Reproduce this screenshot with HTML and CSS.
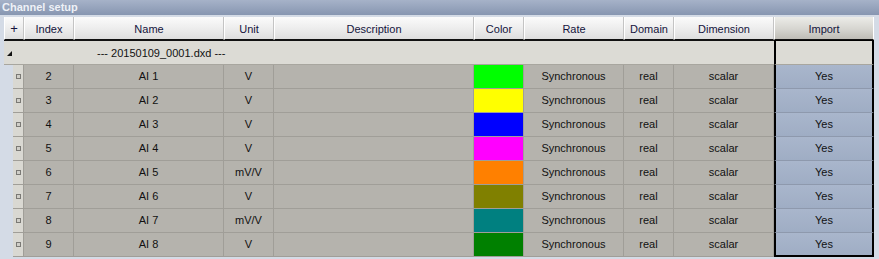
FILE: index.html
```html
<!DOCTYPE html>
<html lang="en">
<head>
    <meta charset="UTF-8">
    <title>Channel setup</title>
    <link rel="stylesheet" href="styles.css">
</head>
<body>
    <div class="title-bar">Channel setup</div>
    <div class="grid-wrap">
        <div class="grid">
            <div class="hcell plus">+</div>
            <div class="hcell">Index</div>
            <div class="hcell">Name</div>
            <div class="hcell">Unit</div>
            <div class="hcell">Description</div>
            <div class="hcell">Color</div>
            <div class="hcell">Rate</div>
            <div class="hcell">Domain</div>
            <div class="hcell">Dimension</div>
            <div class="hcell import-head">Import</div>

            <div class="group-row">
                <span class="toggle"></span>
                <span class="group-label">--- 20150109_0001.dxd ---</span>
            </div>
            <div class="group-import"></div>

            <div class="row">
                <div class="cell indicator"><span class="mark"></span></div>
                <div class="cell">2</div><div class="cell">AI 1</div><div class="cell">V</div><div class="cell"></div>
                <div class="cell swatch" style="background:#00ff00"></div>
                <div class="cell">Synchronous</div><div class="cell">real</div><div class="cell">scalar</div>
                <div class="cell imp">Yes</div>
            </div>
            <div class="row">
                <div class="cell indicator"><span class="mark"></span></div>
                <div class="cell">3</div><div class="cell">AI 2</div><div class="cell">V</div><div class="cell"></div>
                <div class="cell swatch" style="background:#ffff00"></div>
                <div class="cell">Synchronous</div><div class="cell">real</div><div class="cell">scalar</div>
                <div class="cell imp">Yes</div>
            </div>
            <div class="row">
                <div class="cell indicator"><span class="mark"></span></div>
                <div class="cell">4</div><div class="cell">AI 3</div><div class="cell">V</div><div class="cell"></div>
                <div class="cell swatch" style="background:#0000ff"></div>
                <div class="cell">Synchronous</div><div class="cell">real</div><div class="cell">scalar</div>
                <div class="cell imp">Yes</div>
            </div>
            <div class="row">
                <div class="cell indicator"><span class="mark"></span></div>
                <div class="cell">5</div><div class="cell">AI 4</div><div class="cell">V</div><div class="cell"></div>
                <div class="cell swatch" style="background:#ff00ff"></div>
                <div class="cell">Synchronous</div><div class="cell">real</div><div class="cell">scalar</div>
                <div class="cell imp">Yes</div>
            </div>
            <div class="row">
                <div class="cell indicator"><span class="mark"></span></div>
                <div class="cell">6</div><div class="cell">AI 5</div><div class="cell">mV/V</div><div class="cell"></div>
                <div class="cell swatch" style="background:#ff8000"></div>
                <div class="cell">Synchronous</div><div class="cell">real</div><div class="cell">scalar</div>
                <div class="cell imp">Yes</div>
            </div>
            <div class="row">
                <div class="cell indicator"><span class="mark"></span></div>
                <div class="cell">7</div><div class="cell">AI 6</div><div class="cell">V</div><div class="cell"></div>
                <div class="cell swatch" style="background:#808000"></div>
                <div class="cell">Synchronous</div><div class="cell">real</div><div class="cell">scalar</div>
                <div class="cell imp">Yes</div>
            </div>
            <div class="row">
                <div class="cell indicator"><span class="mark"></span></div>
                <div class="cell">8</div><div class="cell">AI 7</div><div class="cell">mV/V</div><div class="cell"></div>
                <div class="cell swatch" style="background:#008080"></div>
                <div class="cell">Synchronous</div><div class="cell">real</div><div class="cell">scalar</div>
                <div class="cell imp">Yes</div>
            </div>
            <div class="row last">
                <div class="cell indicator"><span class="mark"></span></div>
                <div class="cell">9</div><div class="cell">AI 8</div><div class="cell">V</div><div class="cell"></div>
                <div class="cell swatch" style="background:#008000"></div>
                <div class="cell">Synchronous</div><div class="cell">real</div><div class="cell">scalar</div>
                <div class="cell imp">Yes</div>
            </div>
        </div>
    </div>
</body>
</html>
```

FILE: styles.css
```css
body {
    margin: 0;
    background: #d4dbe6;
    font-family: 'Liberation Sans', Arial, sans-serif;
    font-size: 11px;
    color: #111;
}

.title-bar {
    height: 15px;
    line-height: 14px;
    padding-left: 2px;
    background: linear-gradient(#a6b2c8, #8796b1);
    color: #eef1f7;
    font-weight: bold;
    font-size: 11px;
}

.grid-wrap {
    padding: 2px 5px 0 4px;
}

.grid {
    display: grid;
    grid-template-columns: 20px 50px 150px 50px 200px 50px 100px 50px 100px 100px;
}

.hcell {
    height: 23px;
    line-height: 24px;
    text-align: center;
    color: #14143c;
    background: linear-gradient(#fbfbfb, #ececec 55%, #dedede);
    border-right: 1px solid #c4c4c4;
    border-left: 1px solid #ffffff;
    box-sizing: border-box;
    border-bottom: 1px solid #111;
}

.hcell.plus {
    font-size: 13px;
}

.hcell.import-head {
    background: linear-gradient(#ecece8, #d6d5d0 55%, #bebcb6);
    border-right: 1px solid #ffffff;
}

.group-row {
    grid-column: 1 / 10;
    height: 25px;
    background: #dcdbd5;
    border-top: 1px solid #111;
    border-bottom: 1px solid #a8a69f;
    box-sizing: border-box;
    display: flex;
    align-items: center;
}

.toggle {
    width: 0;
    height: 0;
    margin-left: 3px;
    margin-top: 2px;
    border-left: 5px solid transparent;
    border-bottom: 5px solid #111;
}

.group-label {
    margin-left: 85px;
}

.group-import {
    height: 25px;
    background: #dcdbd5;
    border: 2px solid #000;
    border-top-width: 1px;
    border-bottom: 1px solid #a8a69f;
    box-sizing: border-box;
}

.row {
    display: contents;
}

.cell {
    height: 24px;
    line-height: 23px;
    text-align: center;
    background: #b5b3ad;
    border-right: 1px solid #a09e98;
    border-bottom: 1px solid #a09e98;
    box-sizing: border-box;
    overflow: hidden;
}

.cell.indicator {
    margin-left: 9px;
    background: #d9d8d2;
    border-right: 1px solid #a09e98;
    display: flex;
    align-items: center;
    justify-content: center;
}

.mark {
    width: 3px;
    height: 3px;
    border: 1px solid #7a7975;
    background: #cfcec8;
}

.cell.imp {
    background: linear-gradient(#a9b6cc, #9fadc4);
    border-left: 2px solid #000;
    border-right: 2px solid #000;
    border-bottom: 1px solid #8e99ad;
}

.row.last .cell.imp {
    border-bottom: 2px solid #000;
}
```
